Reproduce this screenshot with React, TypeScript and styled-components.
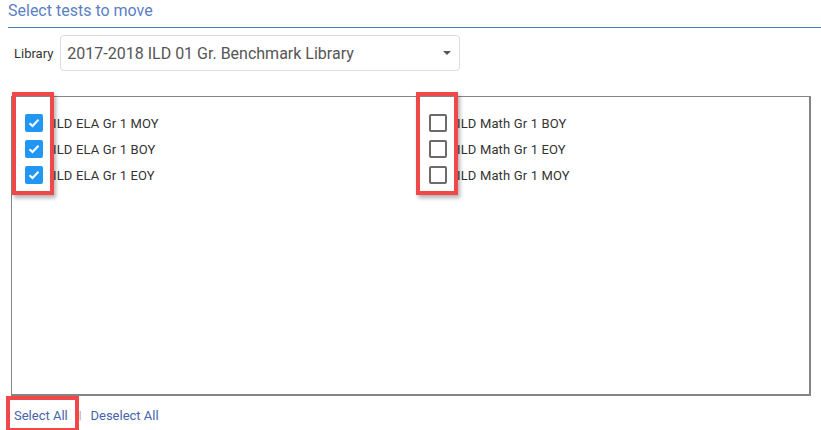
import React from "react";
import styled, { createGlobalStyle } from "styled-components";

const Global = createGlobalStyle`
  html, body { margin: 0; padding: 0; background: #fff; }
  body { font-family: Roboto, "Liberation Sans", Arial, sans-serif; }
`;

const Page = styled.div`
  width: 821px;
  height: 430px;
  overflow: hidden;
  padding-left: 8px;
  box-sizing: border-box;
`;

const Header = styled.div`
  height: 28px;
  border-bottom: 1.5px solid #4f79b3;
  box-sizing: border-box;
  display: flex;
  align-items: flex-start;
`;

const Title = styled.h1`
  margin: 1px 0 0 0;
  font-size: 16px;
  line-height: 20px;
  font-weight: 400;
  color: #5c80c4;
`;

const LibraryRow = styled.div`
  display: flex;
  align-items: center;
  margin-top: 7px;
  padding-left: 6px;
  gap: 7px;
`;

const Label = styled.span`
  font-size: 13px;
  color: #333;
`;

const SelectBox = styled.div`
  width: 400px;
  height: 36px;
  box-sizing: border-box;
  border: 1px solid #dcdcdc;
  border-radius: 4px;
  display: flex;
  align-items: center;
  justify-content: space-between;
  padding: 0 8px 0 6px;
  font-size: 16px;
  color: #555;
`;

const Caret = styled.span`
  width: 0;
  height: 0;
  border-left: 4px solid transparent;
  border-right: 4px solid transparent;
  border-top: 4px solid #555;
`;

const ListBox = styled.div`
  margin-top: 25px;
  margin-left: 3px;
  width: 800px;
  height: 300px;
  box-sizing: border-box;
  border: 1px solid #858585;
  border-right-width: 2px;
  border-bottom-width: 2px;
  padding: 17px 0 0 13px;
  display: grid;
  grid-template-columns: 404px 1fr;
  align-items: start;
`;

const Column = styled.div`
  position: relative;
  display: flex;
  flex-direction: column;
  gap: 8px;
`;

const Highlight = styled.div`
  position: absolute;
  left: -13px;
  top: -22px;
  width: 42px;
  height: 103px;
  box-sizing: border-box;
  border: 4px solid #f04848;
  box-shadow: 2px 3px 4px rgba(0, 0, 0, 0.3);
  pointer-events: none;
`;

const Item = styled.label`
  display: flex;
  align-items: center;
  gap: 10px;
  height: 18px;
  font-size: 13px;
  letter-spacing: 0.15px;
  color: #333;
`;

const Box = styled.span<{ $checked: boolean }>`
  width: 18px;
  height: 18px;
  box-sizing: border-box;
  border-radius: 2px;
  display: flex;
  align-items: center;
  justify-content: center;
  background: ${(p) => (p.$checked ? "#2196f3" : "#fff")};
  border: ${(p) => (p.$checked ? "none" : "2px solid #6a6a6a")};
`;

const Footer = styled.div`
  position: relative;
  display: flex;
  align-items: center;
  height: 34px;
  padding: 4px 0 0 6px;
  box-sizing: border-box;
  font-size: 13px;
  color: #4464ad;
`;

const Link = styled.span`
  color: #4464ad;
`;

const Sep = styled.span`
  color: #999;
  margin: 0 9px 0 11px;
  font-size: 11px;
`;

const FooterHighlight = styled.div`
  position: absolute;
  left: -2px;
  top: 0;
  width: 73px;
  height: 36px;
  box-sizing: border-box;
  border: 4px solid #f04848;
  pointer-events: none;
`;

const Check = () => (
  <svg width="12" height="10" viewBox="0 0 12 10">
    <path d="M1.5 5.2 L4.5 8 L10.5 1.8" fill="none" stroke="#fff" strokeWidth="2" />
  </svg>
);

const left = ["ILD ELA Gr 1 MOY", "ILD ELA Gr 1 BOY", "ILD ELA Gr 1 EOY"];
const right = ["ILD Math Gr 1 BOY", "ILD Math Gr 1 EOY", "ILD Math Gr 1 MOY"];

export default function App() {
  return (
    <>
      <Global />
      <Page>
        <Header>
          <Title>Select tests to move</Title>
        </Header>
        <LibraryRow>
          <Label>Library</Label>
          <SelectBox>
            <span>2017-2018 ILD 01 Gr. Benchmark Library</span>
            <Caret />
          </SelectBox>
        </LibraryRow>
        <ListBox>
          <Column>
            <Highlight />
            {left.map((t) => (
              <Item key={t}>
                <Box $checked>
                  <Check />
                </Box>
                {t}
              </Item>
            ))}
          </Column>
          <Column>
            <Highlight />
            {right.map((t) => (
              <Item key={t}>
                <Box $checked={false} />
                {t}
              </Item>
            ))}
          </Column>
        </ListBox>
        <Footer>
          <FooterHighlight />
          <Link>Select All</Link>
          <Sep>|</Sep>
          <Link>Deselect All</Link>
        </Footer>
      </Page>
    </>
  );
}
